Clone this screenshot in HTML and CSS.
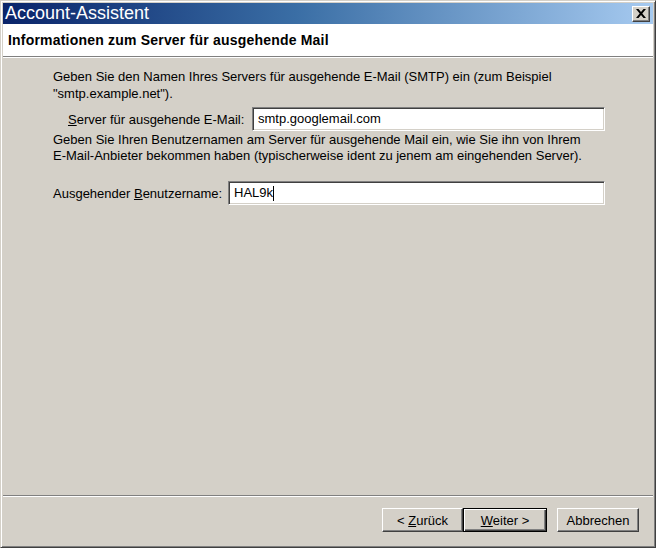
FILE: index.html
```html
<!DOCTYPE html>
<html lang="de">
<head>
<meta charset="utf-8">
<title>Account-Assistent</title>
<link rel="stylesheet" href="styles.css">
</head>
<body>
<div class="window">
  <div class="titlebar">
    <span class="title">Account-Assistent</span>
    <button class="close" type="button" aria-label="Schließen">
      <svg width="10" height="9" viewBox="0 0 10 9"><path d="M0 0h2.5l2.5 3 2.5-3H10L6.3 4.5 10 9H7.5L5 6 2.5 9H0l3.7-4.5z" fill="#000"/></svg>
    </button>
  </div>
  <div class="header">
    <span class="heading">Informationen zum Server für ausgehende Mail</span>
  </div>
  <div class="content">
    <p class="para">Geben Sie den Namen Ihres Servers für ausgehende E-Mail (SMTP) ein (zum Beispiel<br>"smtp.example.net").</p>
    <div class="row row-server">
      <label class="label"><u>S</u>erver für ausgehende E-Mail:</label>
      <div class="field">smtp.googlemail.com</div>
    </div>
    <p class="para para2">Geben Sie Ihren Benutzernamen am Server für ausgehende Mail ein, wie Sie ihn von Ihrem<br>E-Mail-Anbieter bekommen haben (typischerweise ident zu jenem am eingehenden Server).</p>
    <div class="row row-user">
      <label class="label">Ausgehender <u>B</u>enutzername:</label>
      <div class="field field-user">HAL9k<span class="caret"></span></div>
    </div>
  </div>
  <div class="footer">
    <div class="buttons">
      <button class="btn" type="button">&lt; <u>Z</u>urück</button>
      <button class="btn btn-default" type="button"><u>W</u>eiter &gt;</button>
      <button class="btn btn-cancel" type="button">Abbrechen</button>
    </div>
  </div>
</div>
</body>
</html>
```

FILE: styles.css
```css
* { box-sizing: border-box; }
html, body { margin: 0; padding: 0; background: #d4d0c8; }
body { font-family: "Liberation Sans", Arial, sans-serif; font-size: 13px; color: #000; }

.window {
  width: 656px;
  height: 548px;
  display: flex;
  flex-direction: column;
  background: #d4d0c8;
  border-top: 1px solid #d4d0c8;
  border-left: 1px solid #d4d0c8;
  border-right: 1px solid #404040;
  border-bottom: 1px solid #404040;
  box-shadow: inset 1px 1px 0 #ffffff, inset -1px -1px 0 #808080;
  padding: 2px;
}

.titlebar {
  height: 21px;
  flex: none;
  display: flex;
  align-items: center;
  justify-content: space-between;
  background: linear-gradient(to right, #0a246a 0%, #3a6ea5 45%, #a6caf0 100%);
  padding: 0 3px 0 2px;
}
.title {
  color: #fff;
  font-size: 18px;
  line-height: 21px;
  white-space: nowrap;
}
.close {
  width: 18px;
  height: 16px;
  padding: 0;
  margin: 0;
  display: flex;
  align-items: center;
  justify-content: center;
  background: #d4d0c8;
  border-top: 1px solid #ffffff;
  border-left: 1px solid #ffffff;
  border-right: 1px solid #404040;
  border-bottom: 1px solid #404040;
  box-shadow: inset -1px -1px 0 #808080;
}

.header {
  flex: none;
  height: 33px;
  background: #ffffff;
  display: flex;
  align-items: center;
  padding-left: 5px;
  border-bottom: 1px solid #808080;
  box-shadow: 0 1px 0 #ffffff;
  margin-bottom: 1px;
}
.heading { font-weight: bold; font-size: 14px; letter-spacing: 0.2px; }

.content {
  flex: 1;
  padding: 10px 48px 0 50px;
}
.para {
  margin: 0;
  line-height: 17px;
  white-space: nowrap;
}
.para2 { line-height: 16px; margin-top: 1px; }

.row {
  display: flex;
  align-items: center;
  height: 24px;
}
.row-server { margin-top: 5px; padding-left: 15px; }
.row-user { margin-top: 17px; }
.label { white-space: nowrap; }
.row-server .label { width: 184px; }
.row-user .label { width: 175px; }
.field {
  flex: 1;
  height: 24px;
  background: #fff;
  border-top: 1px solid #808080;
  border-left: 1px solid #808080;
  border-right: 1px solid #ffffff;
  border-bottom: 1px solid #ffffff;
  box-shadow: inset 1px 1px 0 #404040, inset -1px -1px 0 #d4d0c8;
  padding: 0 5px;
  line-height: 22px;
  display: flex;
  align-items: center;
}
.caret {
  display: inline-block;
  width: 1px;
  height: 15px;
  background: #000;
}

.footer {
  flex: none;
  height: 50px;
  border-top: 1px solid #808080;
  box-shadow: inset 0 1px 0 #ffffff;
  display: flex;
  justify-content: flex-end;
  padding: 12px 14px 0 0;
}
.buttons { display: flex; align-items: flex-start; }
.btn {
  font-family: inherit;
  font-size: 13px;
  color: #000;
  width: 81px;
  height: 24px;
  padding: 0;
  margin: 0;
  background: #d4d0c8;
  border-top: 1px solid #ffffff;
  border-left: 1px solid #ffffff;
  border-right: 1px solid #404040;
  border-bottom: 1px solid #404040;
  box-shadow: inset -1px -1px 0 #808080;
}
.btn-default {
  width: 84px;
  border: 1px solid #000;
  box-shadow: inset 1px 1px 0 #ffffff, inset -1px -1px 0 #404040, inset -2px -2px 0 #808080;
}
.btn-cancel { margin-left: 10px; width: 82px; }
```
